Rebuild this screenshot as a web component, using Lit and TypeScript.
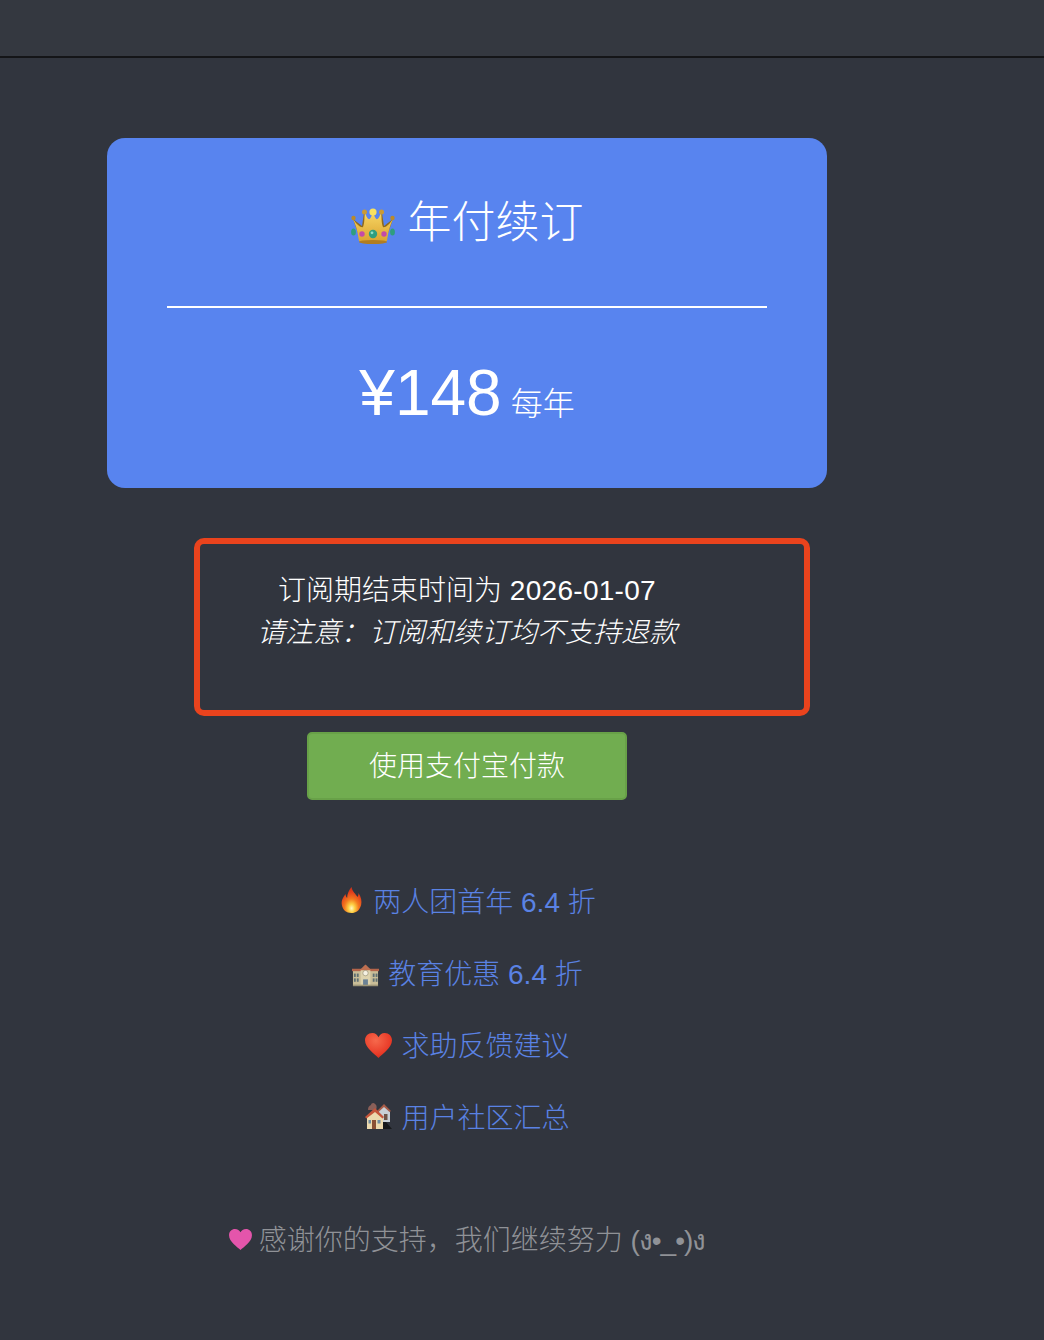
import { LitElement, html, css, svg } from "lit";
import { customElement } from "lit/decorators.js";

const crown = html`<svg class="crown" viewBox="0 0 44 36" aria-hidden="true">
  <defs><linearGradient id="cg" x1="0" y1="0" x2="0" y2="1"><stop offset="0" stop-color="#f8d867"/><stop offset="1" stop-color="#d9a02c"/></linearGradient></defs>
  <path d="M2 11 L8 28 Q22 22 36 28 L42 11 L33 18 L31 5 L24 16 L20 16 L13 5 L11 18 Z" fill="#8f6a1d"/>
  <path d="M2 11 C6 20 7 26 8 33 Q22 38 36 33 C37 26 38 20 42 11 C38 17 34 20 32 19 C30 14 31 9 30 5 C27 12 25 15 22 3 C19 15 17 12 14 5 C13 9 14 14 12 19 C10 20 6 17 2 11 Z" fill="url(#cg)"/>
  <circle cx="2.500" cy="10" r="2.200" fill="#b98a2a"/><circle cx="13.500" cy="4" r="2.500" fill="#c99a35"/><circle cx="30.500" cy="4" r="2.500" fill="#c99a35"/><circle cx="41.500" cy="10" r="2.200" fill="#b98a2a"/><circle cx="22" cy="4" r="3.600" fill="#f9e160"/>
  <ellipse cx="22" cy="34" rx="14" ry="2" fill="#b17d20"/>
  <circle cx="22" cy="26" r="4.200" fill="#2f9e80"/><circle cx="21" cy="24.800" r="1.400" fill="#8fe0c5"/>
  <circle cx="11" cy="26" r="2.700" fill="#c44aa8"/><circle cx="33" cy="26" r="2.700" fill="#c44aa8"/>
  <ellipse cx="2.500" cy="24" rx="2.400" ry="3.500" fill="#2f9e80"/><ellipse cx="41.500" cy="24" rx="2.400" ry="3.500" fill="#2f9e80"/>
</svg>`;

const fire = html`<svg class="fire" viewBox="0 0 24 28" preserveAspectRatio="none" aria-hidden="true">
  <defs><radialGradient id="fg" cx="0.5" cy="0.82" r="0.72"><stop offset="0" stop-color="#fff8c4"/><stop offset="0.22" stop-color="#fdd044"/><stop offset="0.5" stop-color="#f47a1f"/><stop offset="0.85" stop-color="#e2401c"/><stop offset="1" stop-color="#d3351a"/></radialGradient></defs>
  <path d="M12 1 C13 6 17 8 19 11 C20 9 20 8 20 7 C23 11 24 15 23 19 C21 25 17 27 12 27 C6 27 2 24 1 19 C0 14 3 11 5 8 C5.500 10 6 11 7 12 C7 8 9 4 12 1 Z" fill="url(#fg)"/>
</svg>`;

const school = html`<svg class="emoji school" viewBox="0 0 28 24" aria-hidden="true">
  <rect x="1" y="6" width="26" height="17" fill="#c9bd97"/>
  <rect x="0" y="5" width="28" height="2.500" fill="#b5654a"/>
  <path d="M9 6 L14 1 L19 6 V23 H9 Z" fill="#ddd3ae"/>
  <path d="M8 6.500 L14 0.500 L20 6.500 Z" fill="#bf6e4f"/>
  <circle cx="14" cy="9.500" r="2.800" fill="#f4f1e3" stroke="#8c8468" stroke-width="0.600"/>
  <rect x="11.500" y="16" width="5" height="7" fill="#6b8295"/>
  ${[2.5, 5.5, 22, 25].map((x) => [10, 15].map((y) => svg`<rect x=${x - 0.5} y=${y} width="1.900" height="3.500" fill="#5f6f73"/>`))}
  <rect x="1" y="21.500" width="26" height="1.500" fill="#9e9678"/>
</svg>`;

const redHeart = html`<svg class="emoji lift2" viewBox="0 0 26 24" aria-hidden="true">
  <defs><radialGradient id="hg" cx="0.4" cy="0.3" r="0.8"><stop offset="0" stop-color="#f6694c"/><stop offset="0.7" stop-color="#e93a27"/><stop offset="1" stop-color="#c52a1d"/></radialGradient></defs>
  <path d="M13 24 C9 20 0 14 0 7 C0 3 3 0 7 0 C10 0 12 2 13 4 C14 2 16 0 19 0 C23 0 26 3 26 7 C26 14 17 20 13 24 Z" fill="url(#hg)"/>
</svg>`;

const houses = html`<svg class="emoji lift3" viewBox="0 0 27 27" aria-hidden="true">
  <path d="M15 20 L21 20 L27 27 L16 27 Z" fill="#17191c"/>
  <path d="M3 8 C3 5 4 4 6 3 C6 1 9 0 10 2 C12 3 12 6 11 8 Z" fill="#8a5f58"/>
  <path d="M13 9 L19 3 L25 9 V20 H14 V10 Z" fill="#c9d0d6"/>
  <path d="M12 9 L19 2 L26 9 L24.500 10 L19 5 L13.500 10 Z" fill="#a85c48"/>
  <rect x="19" y="12" width="3.500" height="6" fill="#6e5446"/>
  <path d="M2 15 L10 8 L18 15 V27 H2 Z" fill="#ecd9ae"/>
  <path d="M0 15 L10 6 L19 15 L17.500 16.500 L10 10 L1.500 16.500 Z" fill="#c4543a"/>
  <rect x="7" y="18" width="4" height="9" fill="#8a4f34"/>
  <rect x="12.500" y="18" width="3" height="3.500" fill="#6f8ba0"/>
  <rect x="3.500" y="18" width="2.500" height="3.500" fill="#6f8ba0"/>
</svg>`;

const pinkHeart = html`<svg class="pink" viewBox="0 0 24 22" aria-hidden="true">
  <path d="M12 22 C9 19 0 13.500 0 6.500 C0 2.500 3 0 6.200 0 C9 0 11 1.500 12 3.500 C13 1.500 15 0 17.800 0 C21 0 24 2.500 24 6.500 C24 13.500 15 19 12 22 Z" fill="#e455ab"/>
</svg>`;

@customElement("app-root")
export class AppRoot extends LitElement {
  static styles = css`
    :host {
      display: block;
      height: 1340px;
      overflow: hidden;
      background: #31353e;
      font-family: "Liberation Sans", "Noto Sans CJK SC", sans-serif;
      font-weight: 300;
      color: #fff;
    }
    .topbar {
      height: 56px;
      background: #343840;
      border-bottom: 2px solid #141518;
    }
    .col {
      position: relative;
      width: 720px;
      margin-left: 107px;
      padding-top: 80px;
      text-align: center;
    }
    .card {
      height: 350px;
      box-sizing: border-box;
      background: #5884ef;
      border-radius: 18px;
      padding: 0 60px;
    }
    .title {
      height: 170px;
      box-sizing: border-box;
      padding-top: 2px;
      border-bottom: 2px solid #fff;
      display: flex;
      align-items: center;
      justify-content: center;
      gap: 13px;
      font-size: 44px;
      line-height: 1;
    }
    .price {
      padding-top: 45px;
      font-size: 64px;
      line-height: 80px;
    }
    .per { font-size: 32px; margin-left: 9px; }
    .crown { width: 44px; height: 36px; flex: none; margin-top: 6px; }
    .notice {
      margin-top: 82px;
      font-size: 28px;
      line-height: 41px;
    }
    .date { letter-spacing: 0.3px; }
    .notice em { display: block; margin-top: 1px; font-style: italic; }
    .annot {
      position: absolute;
      left: 87px;
      top: 480px;
      width: 616px;
      height: 178px;
      box-sizing: border-box;
      border: 6px solid #ea431d;
      border-radius: 10px;
    }
    .pay {
      box-sizing: border-box;
      width: 320px;
      height: 68px;
      margin: 79px auto 0;
      background: #71ad50;
      border: 2px solid #68a148;
      border-radius: 5px;
      font-size: 28px;
      line-height: 66px;
      color: #fff;
    }
    .links {
      margin-top: 83px;
      padding-left: 1px;
      display: flex;
      flex-direction: column;
      gap: 32px;
      align-items: center;
    }
    .link {
      height: 40px;
      display: flex;
      align-items: center;
      gap: 9px;
      font-size: 28px;
      line-height: 40px;
      color: #5a82e4;
    }
    .emoji { width: 27px; height: 27px; flex: none; }
    .fire { width: 21px; height: 28px; flex: none; margin: 0 2px 6px; }
    .lift2 { margin-bottom: 4px; }
    .lift3 { margin-bottom: 7px; }
    .thanks {
      margin-top: 82px;
      display: flex;
      align-items: center;
      justify-content: center;
      gap: 7px;
      font-size: 28px;
      line-height: 40px;
      color: #909297;
    }
    .kao { letter-spacing: -1px; }
    .pink { width: 23px; height: 21px; flex: none; margin-bottom: 3px; }
  `;

  render() {
    return html`
      <div class="topbar"></div>
      <div class="col">
        <div class="card">
          <div class="title">${crown}<span>年付续订</span></div>
          <div class="price"><span>¥148</span><span class="per">每年</span></div>
        </div>
        <div class="notice">
          <div>订阅期结束时间为 <span class="date">2026-01-07</span></div>
          <em>请注意：订阅和续订均不支持退款</em>
        </div>
        <div class="annot"></div>
        <div class="pay">使用支付宝付款</div>
        <div class="links">
          <div class="link">${fire}<span>两人团首年 6.4 折</span></div>
          <div class="link">${school}<span>教育优惠 6.4 折</span></div>
          <div class="link">${redHeart}<span>求助反馈建议</span></div>
          <div class="link">${houses}<span>用户社区汇总</span></div>
        </div>
        <div class="thanks">${pinkHeart}<span>感谢你的支持，我们继续努力 <span class="kao">(ง•_•)ง</span></span></div>
      </div>
    `;
  }
}
